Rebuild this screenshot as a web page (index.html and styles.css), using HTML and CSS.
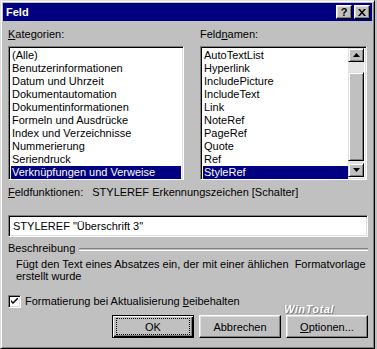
FILE: index.html
```html
<!DOCTYPE html>
<html lang="de">
  <head>
    <meta charset="UTF-8" />
    <title>Feld</title>
    <link rel="stylesheet" href="styles.css">
  </head>
  <body>
    <div class="window">
      <!-- Title bar -->
      <div class="titlebar">
        <span class="title">Feld</span>
        <div class="title-btns">
          <button class="tbtn help">?</button>
          <button class="tbtn close">
            <svg width="8" height="7" viewBox="0 0 8 7"><path d="M0 0h2l2 2.5L6 0h2L5 3.5 8 7H6L4 4.5 2 7H0l3-3.5z" fill="#000"/></svg>
          </button>
        </div>
      </div>

      <div class="content">
        <div class="lists">
          <div class="col">
            <div class="label"><u>K</u>ategorien:</div>
            <ul class="listbox">
              <li>(Alle)</li>
              <li>Benutzerinformationen</li>
              <li>Datum und Uhrzeit</li>
              <li>Dokumentautomation</li>
              <li>Dokumentinformationen</li>
              <li>Formeln und Ausdrücke</li>
              <li>Index und Verzeichnisse</li>
              <li>Nummerierung</li>
              <li>Seriendruck</li>
              <li class="sel">Verknüpfungen und Verweise</li>
            </ul>
          </div>
          <div class="col">
            <div class="label">Feld<u>n</u>amen:</div>
            <div class="listbox with-scroll">
              <ul class="items">
                <li>AutoTextList</li>
                <li>Hyperlink</li>
                <li>IncludePicture</li>
                <li>IncludeText</li>
                <li>Link</li>
                <li>NoteRef</li>
                <li>PageRef</li>
                <li>Quote</li>
                <li>Ref</li>
                <li class="sel">StyleRef</li>
              </ul>
              <div class="scrollbar">
                <div class="sbtn"><svg width="7" height="4" viewBox="0 0 7 4"><path d="M3.5 0L7 4H0z" fill="#000"/></svg></div>
                <div class="track top"></div>
                <div class="thumb"></div>
                <div class="track"></div>
                <div class="sbtn"><svg width="7" height="4" viewBox="0 0 7 4"><path d="M0 0h7L3.5 4z" fill="#000"/></svg></div>
              </div>
            </div>
          </div>
        </div>

        <div class="funcs">
          <span class="label"><u>F</u>eldfunktionen:</span>
          <span>STYLEREF Erkennungszeichen [Schalter]</span>
        </div>

        <div class="input">STYLEREF "Überschrift 3"</div>

        <div class="group">
          <span>Beschreibung</span>
          <div class="etched"></div>
        </div>
        <p class="desc">Fügt den Text eines Absatzes ein, der mit einer ählichen&nbsp; Formatvorlage erstellt wurde</p>

        <div class="check-row">
          <span class="checkbox">
            <svg width="7" height="7" viewBox="0 0 7 7"><path d="M0 2l2 2 5-5v2L2 6 0 4z" fill="#000"/></svg>
          </span>
          <span>Formatierung bei Aktualisierung <u>b</u>eibehalten</span>
        </div>

        <div class="buttons">
          <button class="btn default"><span class="focus">OK</span></button>
          <button class="btn">Abbrechen</button>
          <button class="btn"><u>O</u>ptionen...</button>
        </div>
      </div>
      <span class="watermark">WinTotal</span>
    </div>
  </body>
</html>
```

FILE: styles.css
```css
body {
  margin: 0;
  background: #c0c0c0;
  font-family: "Liberation Sans", Arial, sans-serif;
  font-size: 11px;
  color: #000;
}
.window {
  position: relative;
  width: 375px;
  height: 349px;
  box-sizing: border-box;
  padding: 1px;
  border: 1px solid;
  border-color: #dfdfdf #000 #000 #dfdfdf;
  box-shadow: inset 1px 1px #fff, inset -1px -1px #808080;
  background: #c0c0c0;
}
.titlebar {
  height: 18px;
  margin: 1px 1px 0 1px;
  background: #000080;
  color: #fff;
  display: flex;
  align-items: center;
  justify-content: space-between;
  padding: 0 2px 0 3px;
}
.title {
  font-weight: bold;
  font-size: 11px;
}
.title-btns {
  display: flex;
  gap: 2px;
}
.tbtn {
  width: 16px;
  height: 14px;
  padding: 0;
  background: #c0c0c0;
  border: 1px solid;
  border-color: #fff #000 #000 #fff;
  box-shadow: inset -1px -1px #808080, inset 1px 1px #dfdfdf;
  font: bold 11px "Liberation Sans", Arial, sans-serif;
  line-height: 12px;
  display: flex;
  align-items: center;
  justify-content: center;
}
.content {
  padding: 7px 5px 0 6px;
}
.lists {
  display: grid;
  grid-template-columns: 176px 167px;
  column-gap: 16px;
}
.label {
  line-height: 13px;
  height: 13px;
}
.listbox {
  list-style: none;
  margin: 5px 0 0 0;
  padding: 0;
  height: 134px;
  box-sizing: border-box;
  background: #fff;
  border: 1px solid;
  border-color: #808080 #fff #fff #808080;
  box-shadow: inset 1px 1px #000, inset -1px -1px #dfdfdf;
  padding: 2px 2px 2px 2px;
}
.listbox li,
.items li {
  height: 13px;
  line-height: 13px;
  padding-left: 1px;
  white-space: nowrap;
}
.sel {
  background: #000080;
  color: #fff;
}
.with-scroll {
  display: flex;
  padding-right: 2px;
}
.items {
  list-style: none;
  margin: 0;
  padding: 0;
  flex: 1;
}
.scrollbar {
  width: 16px;
  display: flex;
  flex-direction: column;
  margin-top: -1px;
}
.sbtn {
  height: 14px;
  box-sizing: border-box;
  background: #c0c0c0;
  border: 1px solid;
  border-color: #dfdfdf #000 #000 #dfdfdf;
  box-shadow: inset 1px 1px #fff, inset -1px -1px #808080;
  display: flex;
  align-items: center;
  justify-content: center;
}
.track {
  background: #e4e4e4;
  height: 2px;
}
.track.top {
  height: 10px;
}
.thumb {
  flex: 1;
  background: #c0c0c0;
  border: 1px solid;
  border-color: #dfdfdf #000 #000 #dfdfdf;
  box-shadow: inset 1px 1px #fff, inset -1px -1px #808080;
}
.funcs {
  margin-top: 6px;
  line-height: 13px;
  display: flex;
  gap: 9px;
}
.input {
  margin-top: 16px;
  width: 360px;
  height: 22px;
  box-sizing: border-box;
  background: #fff;
  border: 1px solid;
  border-color: #808080 #fff #fff #808080;
  box-shadow: inset 1px 1px #000, inset -1px -1px #dfdfdf;
  padding: 0 4px;
  line-height: 20px;
}
.group {
  margin-top: 5px;
  display: flex;
  align-items: center;
  gap: 4px;
  line-height: 13px;
  width: 360px;
}
.etched {
  flex: 1;
  height: 1px;
  border-top: 1px solid #808080;
  border-bottom: 1px solid #fff;
  margin-top: 1px;
}
.desc {
  margin: 3px 0 0 8px;
  width: 350px;
  line-height: 12px;
}
.check-row {
  margin-top: 13px;
  display: flex;
  align-items: center;
  gap: 4px;
  line-height: 13px;
}
.checkbox {
  width: 13px;
  height: 13px;
  box-sizing: border-box;
  background: #fff;
  border: 1px solid;
  border-color: #808080 #fff #fff #808080;
  box-shadow: inset 1px 1px #000, inset -1px -1px #dfdfdf;
  display: flex;
  align-items: center;
  justify-content: center;
}
.buttons {
  margin-top: 7px;
  width: 360px;
  display: flex;
  justify-content: flex-end;
  gap: 5px;
}
.btn {
  width: 82px;
  height: 23px;
  padding: 0;
  background: #c0c0c0;
  border: 1px solid;
  border-color: #fff #000 #000 #fff;
  box-shadow: inset -1px -1px #808080, inset 1px 1px #dfdfdf;
  font: 11px "Liberation Sans", Arial, sans-serif;
  color: #000;
}
.btn.default {
  border: 1px solid #000;
  box-shadow: inset 1px 1px #fff, inset -1px -1px #000, inset -2px -2px #808080;
  display: flex;
  align-items: center;
  justify-content: center;
}
.focus {
  display: flex;
  align-items: center;
  justify-content: center;
  width: 72px;
  height: 15px;
  border: 1px dotted #000;
}
.watermark {
  position: absolute;
  left: 283px;
  top: 302px;
  font: italic bold 11px "Liberation Sans", Arial, sans-serif;
  color: #fff;
  text-shadow: 1px 1px #808080, -1px 0 #a0a0a0;
  letter-spacing: 0.5px;
}
```
